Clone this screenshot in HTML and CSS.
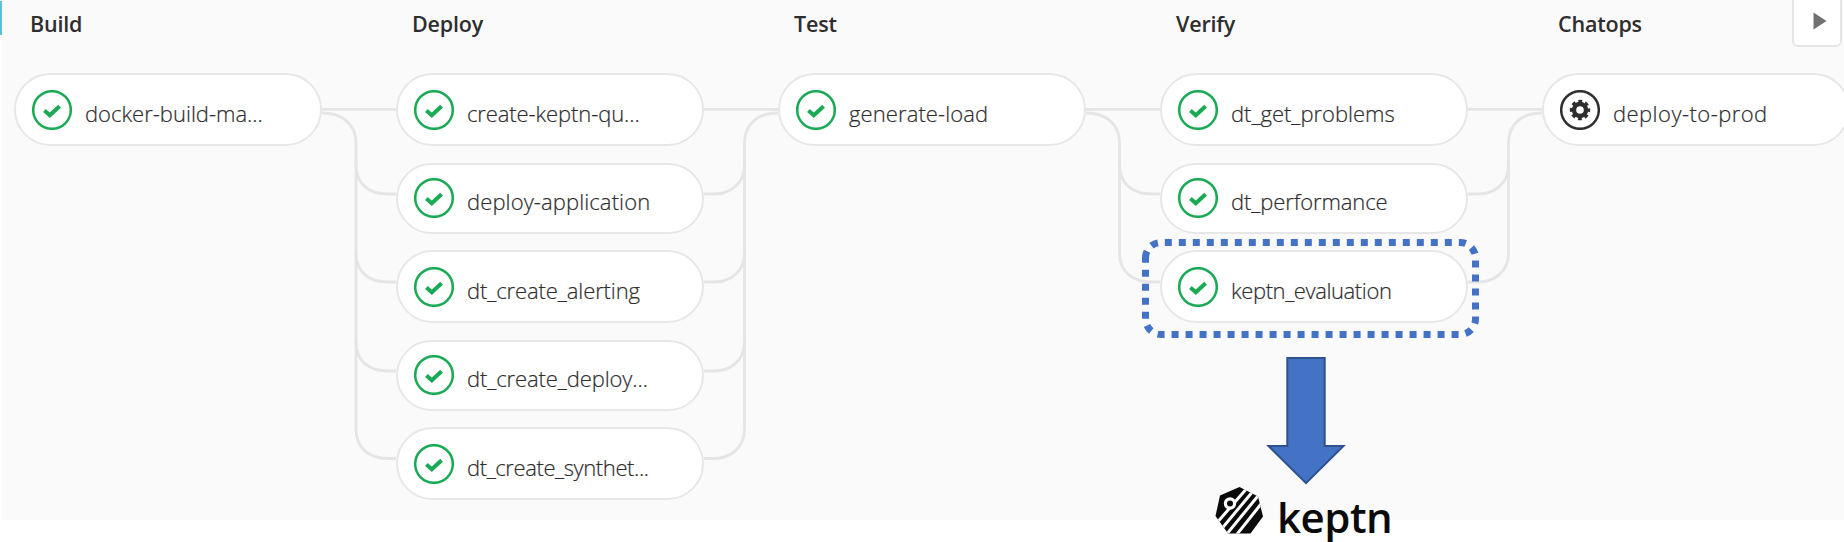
FILE: index.html
```
<!DOCTYPE html>
<html lang="en">
<head>
<meta charset="utf-8">
<title>Pipeline</title>
<link rel="stylesheet" href="styles.css">
</head>
<body>
<svg class="defs" width="0" height="0" aria-hidden="true">
  <symbol id="passed" viewBox="0 0 40 40">
    <circle cx="20" cy="20" r="18.8" fill="none" stroke="#1aaa55" stroke-width="2.5"/>
    <path d="M12.4 20.400 L17.800 25.200 L27.600 16.200" fill="none" stroke="#1aaa55" stroke-width="4"/>
  </symbol>
  <symbol id="manual" viewBox="0 0 40 40">
    <circle cx="20" cy="20" r="18.8" fill="none" stroke="#2e2e2e" stroke-width="2.5"/>
    <circle cx="20" cy="20" r="6" fill="none" stroke="#2e2e2e" stroke-width="4.4"/>
    <circle cx="20" cy="20" r="8.8" fill="none" stroke="#2e2e2e" stroke-width="2.8" stroke-dasharray="3.8 3.111" stroke-dashoffset="1.9"/>
  </symbol>
</svg>
<main class="pipeline">
  <svg class="links" width="1844" height="520" aria-hidden="true">
    <g fill="none" stroke="#e5e5e5" stroke-width="2.8">
      <path d="M322 109.4H396M704 109.4H778M1086 109.4H1160M1468 109.4H1542"/>
      <path d="M322 113C342 113 356 124 356 143V165C356 184 369 194 388 194H396"/>
      <path d="M356 160V253C356 272 369 282 388 282H396"/>
      <path d="M356 250V342C356 361 369 371 388 371H396"/>
      <path d="M356 338V429C356 448 369 458.500 388 458.500H396"/>
      <path d="M778 113C758 113 744.500 124 744.500 143V165C744.500 184 730 194 714 194H704"/>
      <path d="M744.500 160V253C744.500 272 730 282 714 282H704"/>
      <path d="M744.500 250V342C744.500 361 730 371 714 371H704"/>
      <path d="M744.500 338V429C744.500 448 730 458.500 714 458.500H704"/>
      <path d="M1086 113C1106 113 1119.500 124 1119.500 143V165C1119.500 184 1133 194 1152 194H1160"/>
      <path d="M1119.500 160V253C1119.500 272 1133 282 1152 282H1160"/>
      <path d="M1542 113C1522 113 1508.500 124 1508.500 143V165C1508.500 184 1494 194 1478 194H1468"/>
      <path d="M1508.500 160V253C1508.500 272 1494 282 1478 282H1468"/>
    </g>
  </svg>

  <section class="stage">
    <h2 class="stage-name">Build</h2>
    <div class="jobs">
      <div class="job"><svg class="status"><use href="#passed"/></svg><span class="label">docker-build-ma...</span></div>
    </div>
  </section>
  <section class="stage">
    <h2 class="stage-name">Deploy</h2>
    <div class="jobs">
      <div class="job"><svg class="status"><use href="#passed"/></svg><span class="label snug">create-keptn-qu...</span></div>
      <div class="job"><svg class="status"><use href="#passed"/></svg><span class="label wide">deploy-application</span></div>
      <div class="job"><svg class="status"><use href="#passed"/></svg><span class="label snug">dt_create_alerting</span></div>
      <div class="job"><svg class="status"><use href="#passed"/></svg><span class="label snug">dt_create_deploy...</span></div>
      <div class="job"><svg class="status"><use href="#passed"/></svg><span class="label tight">dt_create_synthet...</span></div>
    </div>
  </section>
  <section class="stage">
    <h2 class="stage-name">Test</h2>
    <div class="jobs">
      <div class="job"><svg class="status"><use href="#passed"/></svg><span class="label wide">generate-load</span></div>
    </div>
  </section>
  <section class="stage">
    <h2 class="stage-name">Verify</h2>
    <div class="jobs">
      <div class="job"><svg class="status"><use href="#passed"/></svg><span class="label">dt_get_problems</span></div>
      <div class="job"><svg class="status"><use href="#passed"/></svg><span class="label snug">dt_performance</span></div>
      <div class="job"><svg class="status"><use href="#passed"/></svg><span class="label tight">keptn_evaluation</span></div>
    </div>
  </section>
  <section class="stage">
    <h2 class="stage-name">Chatops</h2>
    <div class="jobs">
      <div class="job"><svg class="status"><use href="#manual"/></svg><span class="label wider">deploy-to-prod</span></div>
    </div>
  </section>

  <button class="play" aria-label="Run"><svg width="14" height="18" viewBox="0 0 14 18"><path d="M0.500 0.500L13.500 9L0.500 17.500Z" fill="#707070"/></svg></button>
</main>

<svg class="annotation" width="1844" height="542" aria-hidden="true">
  <path d="M1145.500 258A15.500 15.500 0 0 1 1161 242.500H1460A15.500 15.500 0 0 1 1475.500 258V319A15.500 15.500 0 0 1 1460 334.500H1161A15.500 15.500 0 0 1 1145.500 319Z" fill="none" stroke="#4472c4" stroke-width="7" stroke-dasharray="7 7"/>
  <path d="M1287.300 358H1324.700V446H1343.500L1306 483.200L1268.500 446H1287.300Z" fill="#4472c4" stroke="#2f528f" stroke-width="2"/>
</svg>
<div class="brand">
  <svg width="50" height="56" viewBox="0 0 50 56">
    <clipPath id="badge"><path d="M24.500 5L5 13.500L0.500 34L13 51.500H35.500L48 34.500L43 14.500Z"/></clipPath>
    <g clip-path="url(#badge)">
      <path d="M0 0H50V56H0Z" fill="#0a0a0a"/>
      <path d="M33 5L0 43M39 8L4 50M45 11.500L11 53M50 17L19 56" stroke="#fcfcfc" stroke-width="3"/>
      <circle cx="15" cy="21.500" r="4.600" fill="#0a0a0a" stroke="#fcfcfc" stroke-width="3.200"/>
    </g>
  </svg>
  <span class="brand-name">keptn</span>
</div>
</body>
</html>
```
FILE: styles.css
```
* { box-sizing: border-box; }

body {
  margin: 0;
  height: 542px;
  position: relative;
  overflow: hidden;
  background: #fff;
  font-family: "Open Sans", "Noto Sans", sans-serif;
  color: #2e2e2e;
}

.defs { position: absolute; }

.pipeline {
  position: relative;
  display: grid;
  grid-template-columns: repeat(5, 308px);
  column-gap: 74px;
  height: 520px;
  margin-left: 2px;
  padding-left: 12px;
  background: #fafafa;
}

/* accent of the active tab on the left edge */
.pipeline::before {
  content: "";
  position: absolute;
  left: -2px;
  top: 1px;
  width: 2px;
  height: 34px;
  background: #5bc0de;
}

.links {
  position: absolute;
  left: -2px;
  top: 0;
}

.stage { position: relative; }

.stage-name {
  margin: 0;
  height: 73px;
  padding: 9px 0 0 16px;
  font-size: 21.5px;
  line-height: 30px;
  font-weight: 600;
  letter-spacing: -0.2px;
}

.jobs {
  display: grid;
  grid-template-rows: 90px 87px 90px 87px 90px;
}

.job {
  display: flex;
  align-items: center;
  gap: 13.5px;
  height: 73px;
  padding-left: 15.5px;
  border: 2px solid #e7e7e7;
  border-radius: 37px;
  background: #fff;
}

.job:nth-child(even) {
  height: 71px;
  padding-bottom: 2px;
}

.status {
  flex: none;
  width: 40px;
  height: 40px;
}

.label {
  margin-top: 6px;
  font-size: 22px;
  line-height: 30px;
  font-weight: 300;
  white-space: nowrap;
  -webkit-text-stroke: 0.2px currentColor;
}

.snug { letter-spacing: -0.1px; }
.wide { letter-spacing: 0.1px; }
.wider { letter-spacing: 0.45px; }
.tight { letter-spacing: -0.4px; }

.play {
  position: absolute;
  right: 2px;
  top: -4px;
  width: 50px;
  height: 51px;
  display: flex;
  align-items: center;
  justify-content: center;
  padding: 0 0 2px 5px;
  border: 2px solid #e5e5e5;
  border-radius: 6px;
  background: #fff;
}

.annotation {
  position: absolute;
  left: 0;
  top: 0;
}

.brand {
  position: absolute;
  left: 1215px;
  top: 482px;
  display: flex;
  gap: 12px;
  height: 60px;
}

.brand-name {
  color: #0a0a0a;
  font-size: 42px;
  line-height: 60px;
  font-weight: 600;
  letter-spacing: -0.5px;
  margin-top: 5px;
}
```
